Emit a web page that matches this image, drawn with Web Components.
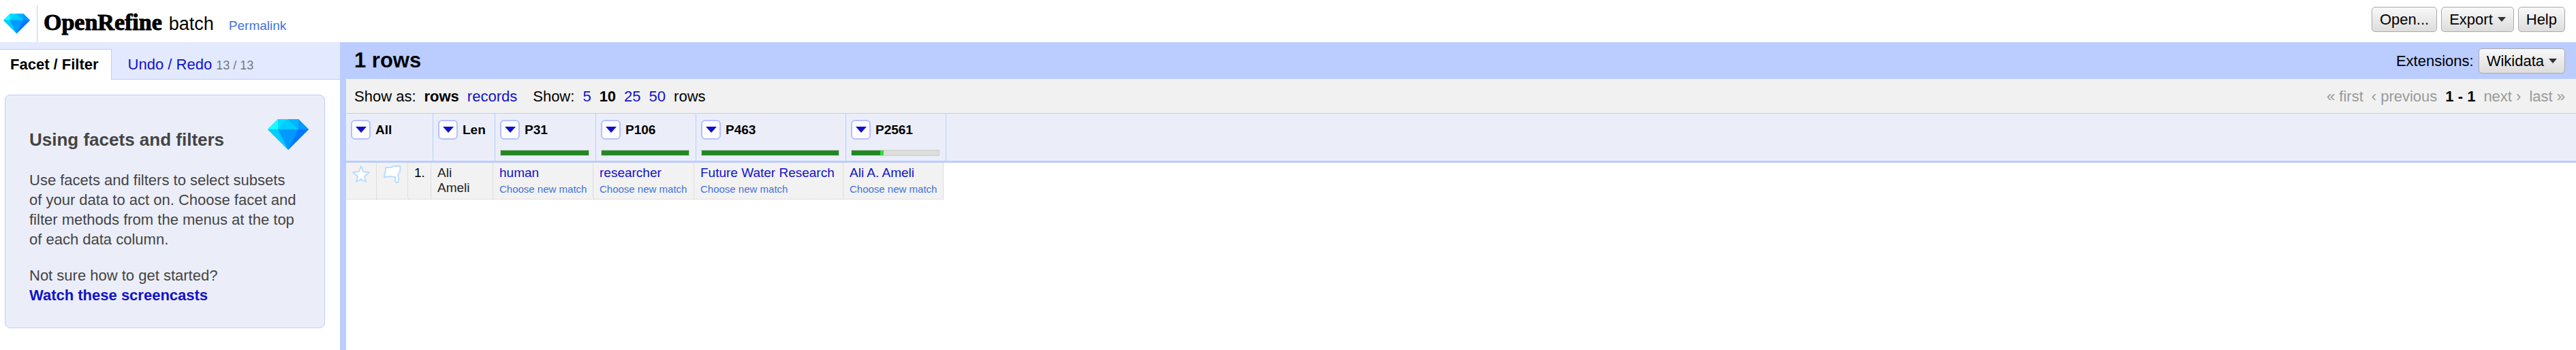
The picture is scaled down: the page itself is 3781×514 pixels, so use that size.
<!DOCTYPE html>
<html lang="en">
<head>
<meta charset="utf-8">
<title>batch - OpenRefine</title>
<style>
html, body { height: 100%; margin: 0; }
body { background: #fff; color: #000; font: 22px/29px "Liberation Sans", Arial, sans-serif; }
</style>
</head>
<body>
<refine-app></refine-app>
<script>
const define = (name, html, setup) => customElements.define(name, class extends HTMLElement {
  connectedCallback() {
    if (this.shadowRoot) return;
    const root = this.attachShadow({ mode: 'open' });
    const t = document.createElement('template');
    t.innerHTML = html;
    root.append(t.content.cloneNode(true));
    if (setup) setup(this, root);
  }
});

define('refine-gem', `
<style>:host{display:block} svg{display:block;width:100%;height:auto}</style>
<svg viewBox="0 0 60 45" aria-hidden="true">
  <path fill="#0af" d="M15 0h30l15 15-30 30L0 15z"/>
  <path fill="#1ff" d="M15 0v15H0z"/>
  <path fill="#0df" d="M15 0h15L15 15z"/>
  <path fill="#0cf" d="M30 0l15 15H15z"/>
  <path fill="#00b4ff" d="M30 0h15v15z"/>
  <path fill="#09f" d="M45 0l15 15H45z"/>
  <path fill="#0cf" d="M0 15h15l15 30z"/>
  <path fill="#09f" d="M15 15h30L30 45z"/>
  <path fill="#07f" d="M45 15h15L30 45z"/>
</svg>`);

define('refine-button', `
<style>
:host{display:block}
button{display:flex;align-items:center;gap:7px;height:37px;box-sizing:border-box;margin:0;padding:0 11px;border:1px solid #aaa;border-radius:5px;background:linear-gradient(#f8f8f8,#ddd);font:inherit;color:#000;cursor:pointer}
i{display:none;border:6px solid transparent;border-top:7px solid #333;border-bottom:0}
:host([menu]) i{display:block}
</style>
<button type="button"><slot></slot><i></i></button>`);

define('refine-header', `
<style>
:host{display:flex;align-items:flex-start;justify-content:space-between;height:62px;box-sizing:border-box;padding:10px 16px 0 5px}
.brand{display:flex;align-items:center;height:50px}
refine-gem{width:39px;margin-right:10px}
h1{display:flex;align-items:baseline;margin:0;padding-left:9px;border-left:1px solid #bcf;font-weight:400;font-size:27px;line-height:50px}
.logo{font:bold 34px/50px "Liberation Serif","Times New Roman",serif;-webkit-text-stroke:1px #000;color:#000;text-decoration:none;margin-right:10px}
.perma{font-size:19px;color:#4272db;text-decoration:none;margin-left:22px}
.controls{display:flex;gap:6px}
</style>
<div class="brand"><refine-gem></refine-gem>
<h1><a class="logo" href="#">OpenRefine</a><span>batch</span><a class="perma" href="#">Permalink</a></h1></div>
<div class="controls"><refine-button>Open...</refine-button><refine-button menu>Export</refine-button><refine-button>Help</refine-button></div>`);

define('refine-sidebar', `
<style>
:host{display:block}
nav{display:flex;height:55px;box-sizing:border-box;padding-top:10px;background:#e3e9ff}
nav a{box-sizing:border-box;padding:8px 24px 0;border-bottom:1px solid #bcf;color:#11c;text-decoration:none}
nav a:first-child{padding:7px 18px 0 15px;border:1px solid #bcf;border-width:1px 1px 0 0;background:#fff;color:#000;font-weight:bold}
nav a:last-child{flex:1}
nav span{font-size:18px;color:#777}
section{position:relative;margin:22px 22px 0 7px;box-sizing:border-box;padding:50px 35px 33px;border:1px solid #bcf;border-radius:8px;background:#ebeef9;color:#444}
refine-gem{position:absolute;right:23px;top:35px;width:60px}
h2{margin:0 0 30px;font-size:26px;line-height:30px}
p{margin:0 0 24px}
p:last-child{margin:0}
p a{color:#11c;font-weight:bold;text-decoration:none}
</style>
<nav><a href="#">Facet / Filter</a><a href="#">Undo / Redo <span>13 / 13</span></a></nav>
<section><refine-gem></refine-gem><h2>Using facets and filters</h2>
<p>Use facets and filters to select subsets of your data to act on. Choose facet and filter methods from the menus at the top of each data column.</p>
<p>Not sure how to get started?<br><a href="#">Watch these screencasts</a></p></section>`);

define('refine-summary', `
<style>
:host{display:block}
.bar{display:flex;justify-content:space-between;align-items:center;height:54px;padding:0 16px 0 12px;background:#bcf}
h2{margin:0;font-size:31px;line-height:40px}
.ext{display:flex;align-items:center;gap:7px}
.tools{display:flex;justify-content:space-between;align-items:center;height:50px;padding:0 16px 0 12px;background:#f1f1f1}
.group,.pager{display:flex;gap:12px}
.group + .group{margin-left:23px}
.left{display:flex}
a{color:#11c;text-decoration:none}
.pager span{color:#999}
</style>
<div class="bar"><h2>1 rows</h2><div class="ext"><span>Extensions:</span><refine-button menu>Wikidata</refine-button></div></div>
<div class="tools"><div class="left">
<div class="group"><span>Show as:</span><b>rows</b><a href="#">records</a></div>
<div class="group"><span>Show:</span><a href="#">5</a><b>10</b><a href="#">25</a><a href="#">50</a><span>rows</span></div></div>
<div class="pager"><span>« first</span><span>‹ previous</span><b>1 - 1</b><span>next ›</span><span>last »</span></div></div>`);

define('refine-column', `
<style>
:host{display:block;height:69px;box-sizing:border-box;padding:9px 9px 0 7px}
.top{display:flex;align-items:center;gap:7px;font-weight:bold;font-size:19px;line-height:29px}
button{display:flex;align-items:center;justify-content:center;width:29px;height:29px;box-sizing:border-box;padding:0;border:2px solid #b4c0ff;border-radius:6px;background:#fff}
i{border:8px solid transparent;border-top:9px solid #11c;border-bottom:0}
.recon{display:none;height:9px;box-sizing:border-box;margin-top:15px;border:1px solid #ccc;background:#ddd}
:host([matched]) .recon{display:flex}
.m{background:#282;flex:none}.n{background:#3d3;flex:none}
</style>
<div class="top"><button type="button" aria-label="Column menu"><i></i></button><slot></slot></div>
<div class="recon"><div class="m"></div><div class="n"></div></div>`, (el, root) => {
  root.querySelector('.m').style.width = (el.getAttribute('matched') || 0) + '%';
  root.querySelector('.n').style.width = (el.getAttribute('fresh') || 0) + '%';
});

define('refine-match', `
<style>
:host{display:block;white-space:nowrap}
a{display:block;color:#11c;text-decoration:none}
.new{padding-top:2px;font-size:15px;color:#4272db}
</style>
<a href="#"><slot></slot></a><a class="new" href="#">Choose new match</a>`);

define('refine-grid', `
<style>
:host{display:block}
table{border-collapse:separate;border-spacing:0;table-layout:fixed;font-size:19px;line-height:22px}
.head{border-top:1px solid #bcf;border-bottom:3px solid #bcf;background:#ebeef9}
th{padding:0;border-right:1px solid #bcf;text-align:left}
td{padding:4px 8px 2px 9px;height:54px;box-sizing:border-box;border-right:1px solid #ddd;border-bottom:1px dotted #ccc;background:#f2f2f2;vertical-align:top;color:#222}
td.name{padding-right:12px}
td.num{padding-right:4px;color:#000}
.icon svg{display:block}
</style>
<div class="head"><table style="width:881px"><colgroup><col style="width:128px"><col style="width:91px"><col style="width:148px"><col style="width:147px"><col style="width:220px"><col style="width:147px"></colgroup>
<tr><th><refine-column>All</refine-column></th><th><refine-column>Len</refine-column></th><th><refine-column matched="100">P31</refine-column></th><th><refine-column matched="100">P106</refine-column></th><th><refine-column matched="100">P463</refine-column></th><th><refine-column matched="33" fresh="4">P2561</refine-column></th></tr></table></div>
<table style="width:877px"><colgroup><col style="width:45px"><col style="width:46px"><col style="width:34px"><col style="width:91px"><col style="width:147px"><col style="width:148px"><col style="width:219px"><col style="width:147px"></colgroup>
<tr><td class="icon"><svg width="26" height="26" viewBox="0 0 26 26" fill="#fff" stroke="#bdf" stroke-width="2" stroke-linejoin="round"><path d="M13 1l3 8 9 1-7 6 2 8-7-4-7 4 2-8-7-6 9-1z"/></svg></td>
<td class="icon"><svg width="27" height="27" viewBox="0 0 27 27" fill="#fff" stroke="#bdf" stroke-width="2" stroke-linejoin="round"><path d="M4 3.3l8.7-.6L15.3 1h10l.2 4-1 5-2.5 3.5 1.3 6.5-1.3 4.5-2.5.8-1.8-2.3.6-6-8.3-1-8 1 .7-5L4 8z"/></svg></td>
<td class="num">1.</td><td class="name">Ali Ameli</td><td><refine-match>human</refine-match></td><td><refine-match>researcher</refine-match></td><td><refine-match>Future Water Research</refine-match></td><td><refine-match>Ali A. Ameli</refine-match></td></tr></table>`);

define('refine-app', `
<style>
:host{display:flex;flex-direction:column;min-height:100vh}
main{flex:1;display:grid;grid-template-columns:499px minmax(0,1fr)}
.view{border-left:9px solid #bcf}
</style>
<refine-header></refine-header>
<main><refine-sidebar></refine-sidebar><div class="view"><refine-summary></refine-summary><refine-grid></refine-grid></div></main>`);
</script>
</body>
</html>
